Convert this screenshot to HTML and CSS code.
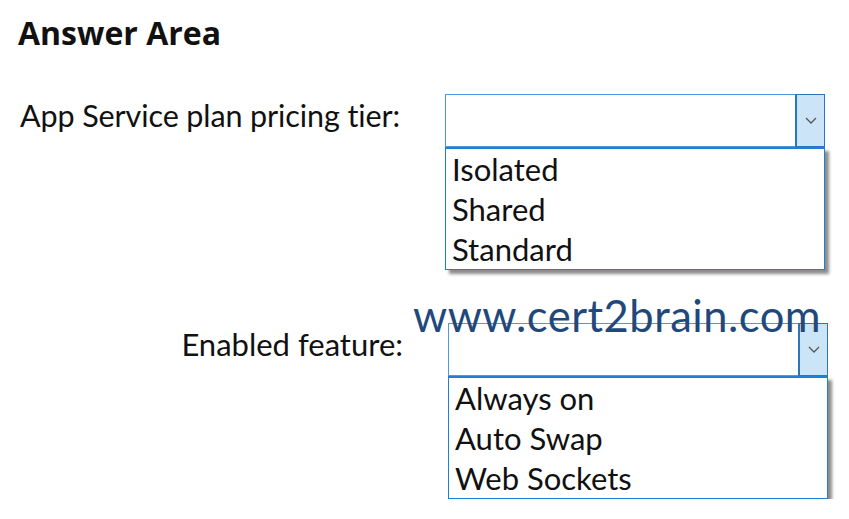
FILE: index.html
```html
<!DOCTYPE html>
<html lang="en">
<head>
    <meta charset="UTF-8">
    <title>Answer Area</title>
    <link rel="stylesheet" href="styles.css">
</head>
<body>

<div class="answer-area">
    <h2 class="title">Answer Area</h2>

    <div class="field field-tier">
        <label class="field-label">App Service plan pricing tier:</label>
        <div class="dropdown">
            <div class="select-box">
                <span class="select-value"></span>
                <span class="select-button">
                    <svg width="12" height="7" viewBox="0 0 12 7"><path d="M1 1 L6 6 L11 1" fill="none" stroke="#555" stroke-width="1.3"/></svg>
                </span>
            </div>
            <ul class="options">
                <li>Isolated</li>
                <li>Shared</li>
                <li>Standard</li>
            </ul>
        </div>
    </div>

    <div class="field field-feature">
        <label class="field-label">Enabled feature:</label>
        <div class="dropdown">
            <div class="select-box">
                <span class="select-value"></span>
                <span class="select-button">
                    <svg width="12" height="7" viewBox="0 0 12 7"><path d="M1 1 L6 6 L11 1" fill="none" stroke="#555" stroke-width="1.3"/></svg>
                </span>
            </div>
            <ul class="options">
                <li>Always on</li>
                <li>Auto Swap</li>
                <li>Web Sockets</li>
            </ul>
        </div>
    </div>

    <!-- watermark sits over the second dropdown -->
    <div class="watermark">www.cert2brain.com</div>
</div>

</body>
</html>
```

FILE: styles.css
```css
body {
    margin: 0;
    background-color: #fff;
    font-family: Lato, "Liberation Sans", sans-serif;
    color: #111;
}

.answer-area {
    position: relative;
    padding: 13px 0 0 17px;
}

.title {
    margin: 0 0 41px 1px;
    font-family: "Open Sans", "Liberation Sans", sans-serif;
    font-size: 32px;
    font-weight: 700;
    line-height: 40px;
    color: #111;
}

.field {
    display: grid;
    grid-template-columns: 383px 380px;
    column-gap: 45px;
    align-items: start;
}

.field-feature {
    margin-top: 53px;
    grid-template-columns: 386px 380px;
}

.field-label {
    justify-self: end;
    white-space: nowrap;
    line-height: 43px;
    font-size: 31px;
}

.field-tier .field-label {
    font-size: 30.5px;
    letter-spacing: -0.1px;
}

.dropdown {
    display: flex;
    flex-direction: column;
}

.select-box {
    display: flex;
    height: 51px;
    border: 1px solid #4a9be0;
    background: #fff;
}

.select-value {
    flex: 1;
}

.select-button {
    width: 27px;
    display: flex;
    align-items: center;
    justify-content: center;
    background: #cce4f7;
    border-left: 1px solid #2f74b5;
    outline: 1px solid #2f74b5;
}

.options {
    box-sizing: border-box;
    list-style: none;
    margin: 0;
    padding: 0 0 0 6px;
    height: 123px;
    border: 1px solid #1e7fd8;
    border-top-width: 2px;
    background: #fff;
    box-shadow: 4px 4px 3px rgba(0, 0, 0, 0.45);
}

.options li {
    font-size: 31px;
    line-height: 40px;
}

.watermark {
    position: absolute;
    left: 413px;
    top: 290px;
    font-size: 43.5px;
    line-height: 50px;
    color: #1f497d;
    letter-spacing: 0.5px;
}
```
